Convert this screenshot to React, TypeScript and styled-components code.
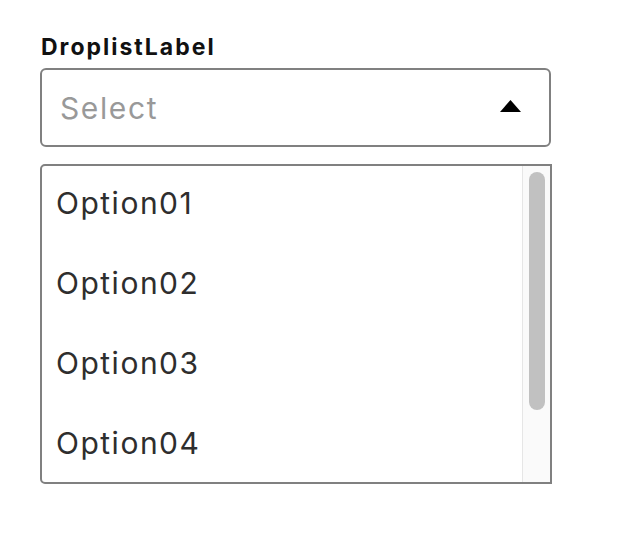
import React from "react";
import styled, { createGlobalStyle } from "styled-components";

const GlobalStyle = createGlobalStyle`
    body {
        margin: 0;
        background: #ffffff;
        font-family: Inter, "Noto Sans", sans-serif;
    }
`;

const Page = styled.div`
    padding: 33px 0 0 40px;
`;

const Field = styled.div`
    display: flex;
    flex-direction: column;
    width: 512px;
`;

const Label = styled.label`
    font-size: 23px;
    font-weight: 700;
    line-height: 28px;
    letter-spacing: 2px;
    color: #111111;
    margin-left: 1px;
    margin-bottom: 7px;
`;

const SelectBox = styled.div`
    display: flex;
    align-items: center;
    justify-content: space-between;
    box-sizing: border-box;
    width: 511px;
    height: 79px;
    padding: 0 28px 0 18px;
    border: 2px solid #808080;
    border-radius: 6px;
`;

const Placeholder = styled.span`
    font-size: 30px;
    letter-spacing: 1.6px;
    color: #999999;
`;

const Caret = styled.svg`
    width: 21px;
    height: 12px;
    margin-top: -3px;
`;

const ListBox = styled.div`
    display: flex;
    box-sizing: border-box;
    height: 320px;
    margin-top: 17px;
    border: 2px solid #808080;
    border-radius: 5px 0 0 5px;
    overflow: hidden;
`;

const Options = styled.ul`
    flex: 1;
    margin: 0;
    padding: 0;
    list-style: none;
`;

const Option = styled.li`
    height: 80px;
    display: flex;
    align-items: center;
    padding-left: 14px;
    font-size: 30px;
    letter-spacing: 1.5px;
    color: #2e2e2e;
    padding-bottom: 6px;
    box-sizing: border-box;
`;

const Track = styled.div`
    width: 28px;
    background: #fafafa;
    border-left: 1px solid #e6e6e6;
    padding: 6px 5px 0 6px;
    box-sizing: border-box;
`;

const Thumb = styled.div`
    height: 238px;
    border-radius: 9px;
    background: #c1c1c1;
`;

const options = ["Option01", "Option02", "Option03", "Option04"];

function App() {
    return (
        <Page>
            <GlobalStyle />
            <Field>
                <Label>DroplistLabel</Label>
                <SelectBox>
                    <Placeholder>Select</Placeholder>
                    <Caret viewBox="0 0 21 12">
                        <path d="M10.5 0 L21 12 L0 12 Z" fill="#000" />
                    </Caret>
                </SelectBox>
                <ListBox>
                    <Options>
                        {options.map((o) => (
                            <Option key={o}>{o}</Option>
                        ))}
                    </Options>
                    <Track>
                        <Thumb />
                    </Track>
                </ListBox>
            </Field>
        </Page>
    );
}

export default App;
